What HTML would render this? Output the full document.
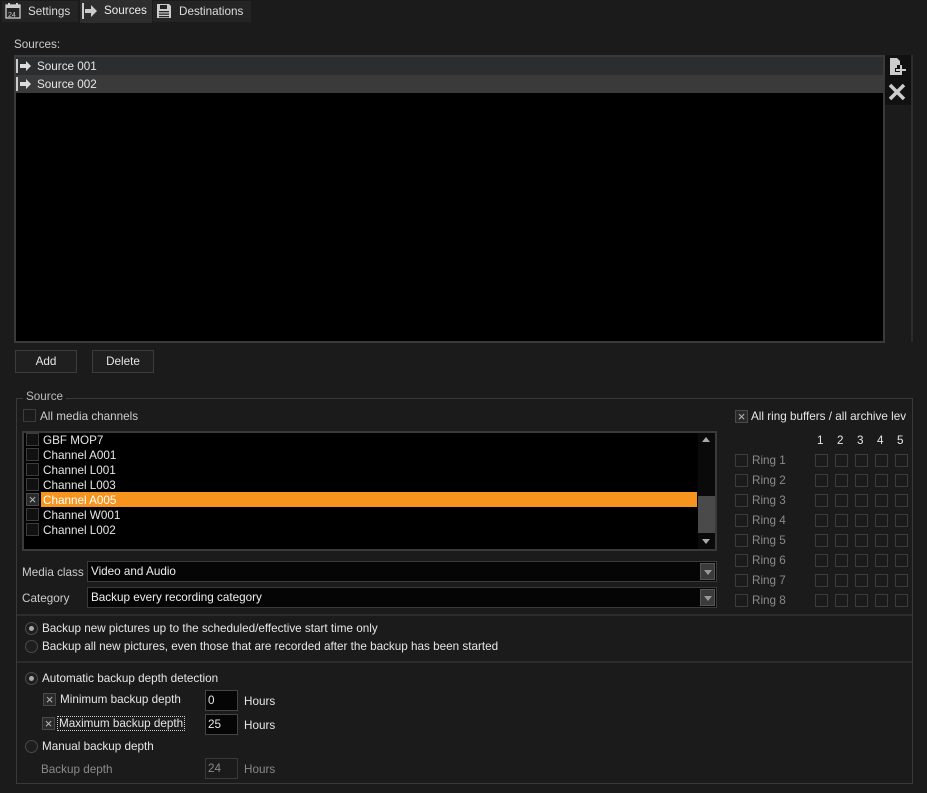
<!DOCTYPE html>
<html><head><style>
*{box-sizing:border-box;margin:0;padding:0}
body{width:927px;height:793px;background:#1b1b1b;font-family:"Liberation Sans",sans-serif;font-size:11.7px;color:#e6e6e6;position:relative;overflow:hidden}
.a{position:absolute;white-space:nowrap}
.cb{position:absolute;width:13px;height:13px;border:1px solid #3c3c3c;background:#1b1b1b}
.cbx{position:absolute;width:13px;height:13px;border:1px solid #4a4a4a;background:#2a2a2a;color:#bbb;font-size:13px;line-height:11px;text-align:center}
.rd{position:absolute;width:13px;height:13px;border:1px solid #4a4a4a;border-radius:50%;background:#1e1e1e}
.rd.on::after{content:"";position:absolute;left:3px;top:3px;width:5px;height:5px;border-radius:50%;background:#aaa}
.dim{color:#8a8a8a}
.combo{position:absolute;height:21px;border:1px solid #3a3a3a;background:#050505;padding:3px 3px;color:#eee}
.combo .dd{position:absolute;right:1px;top:1px;width:15px;height:17px;background:#3a3a3a;border:1px solid #555}
.combo .dd::after{content:"";position:absolute;left:3px;top:6px;border:4px solid transparent;border-top:5px solid #999}
.btn{position:absolute;height:23px;border:1px solid #3c3c3c;background:#1f1f1f;text-align:center;line-height:22px}
.inp{position:absolute;width:33px;height:21px;border:1px solid #444;background:#050505;padding:3px 2px}
</style></head><body>
<div class="a" style="left:2px;top:1px;width:76px;height:21px;background:#242424"></div>
<svg class="a" style="left:5px;top:3px" width="16" height="16" viewBox="0 0 16 16"><rect x="1" y="2" width="14" height="13" fill="none" stroke="#ccc" stroke-width="1.3"/><rect x="1" y="2" width="14" height="3" fill="#ccc"/><rect x="3" y="0" width="2" height="3" fill="#ccc"/><rect x="11" y="0" width="2" height="3" fill="#ccc"/><text x="3" y="14" font-size="7" fill="#ccc" font-family="Liberation Sans">24</text></svg>
<div class="a" style="left:28px;top:5px;color:#ddd">Settings</div>
<div class="a" style="left:80px;top:0;width:72px;height:23px;background:#2e2e2e"></div>
<svg class="a" style="left:82px;top:3px" width="16" height="16" viewBox="0 0 16 16"><rect x="0" y="0" width="2" height="16" fill="#ccc"/><path d="M3 6h6V2l6 6-6 6v-4H3z" fill="#ccc"/></svg>
<div class="a" style="left:104px;top:4px;color:#eee">Sources</div>
<div class="a" style="left:153px;top:1px;width:98px;height:21px;background:#242424"></div>
<svg class="a" style="left:156px;top:3px" width="16" height="16" viewBox="0 0 16 16"><path d="M1 1h12l2 2v12H1z" fill="#ccc"/><rect x="4" y="2" width="7" height="4" fill="#242424"/><rect x="3" y="8" width="10" height="1.3" fill="#242424"/><rect x="3" y="10.5" width="10" height="1.3" fill="#242424"/><rect x="3" y="13" width="10" height="1.3" fill="#242424"/></svg>
<div class="a" style="left:179px;top:5px;color:#ddd">Destinations</div>

<div class="a" style="left:14px;top:38px;color:#ccc">Sources:</div>
<div class="a" style="left:14px;top:55px;width:871px;height:288px;border:2px solid #3a3a3a;background:#000"></div>
<div class="a" style="left:16px;top:57px;width:867px;height:18px;background:#2c2d2f"></div>
<div class="a" style="left:16px;top:75px;width:867px;height:18px;background:#3a3a3a"></div>
<svg class="a" style="left:16px;top:58px" width="18" height="16" viewBox="0 0 18 16"><rect x="0" y="1" width="2" height="14" fill="#ccc"/><path d="M4 6h6V3l5 5-5 5v-3H4z" fill="#ddd"/></svg>
<svg class="a" style="left:16px;top:76px" width="18" height="16" viewBox="0 0 18 16"><rect x="0" y="1" width="2" height="14" fill="#ccc"/><path d="M4 6h6V3l5 5-5 5v-3H4z" fill="#ddd"/></svg>
<div class="a" style="left:37px;top:60px">Source 001</div>
<div class="a" style="left:37px;top:78px">Source 002</div>
<div class="a" style="left:885px;top:55px;width:26px;height:50px;background:#111"></div>
<svg class="a" style="left:888px;top:57px" width="20" height="20" viewBox="0 0 20 20"><path d="M2 1h7l3 3v4h-3v3h-2v4h5v3H2z" fill="#ccc"/><path d="M12 8h2v4h4v2h-4v4h-2v-4H8v-2h4z" fill="#ccc"/></svg>
<svg class="a" style="left:888px;top:83px" width="18" height="18" viewBox="0 0 18 18"><path d="M2 2l14 14M16 2L2 16" stroke="#ccc" stroke-width="3.5"/></svg>
<div class="a" style="left:911px;top:55px;width:2px;height:287px;background:#2c2c2c"></div>

<div class="btn" style="left:15px;top:350px;width:62px">Add</div>
<div class="btn" style="left:92px;top:350px;width:62px">Delete</div>

<div class="a" style="left:16px;top:398px;width:897px;height:386px;border:1px solid #3a3a3a"></div>
<div class="a" style="left:23px;top:390px;background:#1b1b1b;padding:0 3px;color:#bbb">Source</div>
<div class="cb" style="left:23px;top:409px"></div>
<div class="a" style="left:40px;top:410px;color:#ccc">All media channels</div>

<div class="a" style="left:22px;top:431px;width:695px;height:120px;border:2px solid #3a3a3a;background:#000"></div>
<div class="a" style="left:698px;top:433px;width:17px;height:116px;background:#0a0a0a"></div>
<div class="a" style="left:698px;top:496px;width:17px;height:37px;background:#4a4a4a"></div>
<div class="a" style="left:702px;top:437px;border:4px solid transparent;border-bottom:5px solid #aaa;border-top:0"></div>
<div class="a" style="left:702px;top:539px;border:4px solid transparent;border-top:5px solid #aaa;border-bottom:0"></div>
<div class="a" style="left:41px;top:492px;width:656px;height:15px;background:#f7941d"></div>
<div class="cb" style="left:26px;top:433px;background:#111"></div><div class="a" style="left:43px;top:434px">GBF MOP7</div>
<div class="cb" style="left:26px;top:448px;background:#111"></div><div class="a" style="left:43px;top:449px">Channel A001</div>
<div class="cb" style="left:26px;top:463px;background:#111"></div><div class="a" style="left:43px;top:464px">Channel L001</div>
<div class="cb" style="left:26px;top:478px;background:#111"></div><div class="a" style="left:43px;top:479px">Channel L003</div>
<div class="cbx" style="left:26px;top:493px">×</div><div class="a" style="left:43px;top:494px;color:#fff">Channel A005</div>
<div class="cb" style="left:26px;top:508px;background:#111"></div><div class="a" style="left:43px;top:509px">Channel W001</div>
<div class="cb" style="left:26px;top:523px;background:#111"></div><div class="a" style="left:43px;top:524px">Channel L002</div>

<div class="a" style="left:22px;top:566px;color:#ccc">Media class</div>
<div class="combo" style="left:87px;top:561px;width:630px">Video and Audio<div class="dd"></div></div>
<div class="a" style="left:22px;top:592px;color:#ccc">Category</div>
<div class="combo" style="left:87px;top:587px;width:630px">Backup every recording category<div class="dd"></div></div>

<div class="a" style="left:17px;top:614px;width:895px;height:2px;background:#2c2c2c"></div>
<div class="rd on" style="left:25px;top:622px"></div><div class="a" style="left:42px;top:622px">Backup new pictures up to the scheduled/effective start time only</div>
<div class="rd" style="left:25px;top:640px"></div><div class="a" style="left:42px;top:640px">Backup all new pictures, even those that are recorded after the backup has been started</div>
<div class="a" style="left:17px;top:661px;width:895px;height:2px;background:#2c2c2c"></div>
<div class="rd on" style="left:25px;top:672px"></div><div class="a" style="left:42px;top:672px">Automatic backup depth detection</div>
<div class="cbx" style="left:43px;top:693px">×</div><div class="a" style="left:60px;top:693px">Minimum backup depth</div>
<div class="inp" style="left:205px;top:690px">0</div><div class="a" style="left:244px;top:695px">Hours</div>
<div class="cbx" style="left:42px;top:717px">×</div><div class="a" style="left:57px;top:716px;border:1px dotted #ccc;padding:0 1px">Maximum backup depth</div>
<div class="inp" style="left:205px;top:714px">25</div><div class="a" style="left:244px;top:719px">Hours</div>
<div class="rd" style="left:25px;top:740px"></div><div class="a" style="left:42px;top:740px">Manual backup depth</div>
<div class="a dim" style="left:41px;top:763px">Backup depth</div>
<div class="inp dim" style="left:205px;top:758px;border-color:#3a3a3a;background:#1b1b1b">24</div><div class="a dim" style="left:244px;top:763px">Hours</div>

<div class="cbx" style="left:735px;top:410px">×</div><div class="a" style="left:751px;top:410px">All ring buffers / all archive lev</div>
<div class="a" style="left:817px;top:434px">1</div><div class="a" style="left:837px;top:434px">2</div><div class="a" style="left:857px;top:434px">3</div><div class="a" style="left:877px;top:434px">4</div><div class="a" style="left:897px;top:434px">5</div>
<div id="rings"></div>
<script>
var h="";for(var i=0;i<8;i++){var y=454+i*20;h+='<div class="cb" style="left:735px;top:'+y+'px"></div><div class="a dim" style="left:752px;top:'+y+'px">Ring '+(i+1)+'</div>';for(var j=0;j<5;j++)h+='<div class="cb" style="left:'+(815+j*20)+'px;top:'+y+'px"></div>';}
document.getElementById("rings").innerHTML=h;
</script>
</body></html>
